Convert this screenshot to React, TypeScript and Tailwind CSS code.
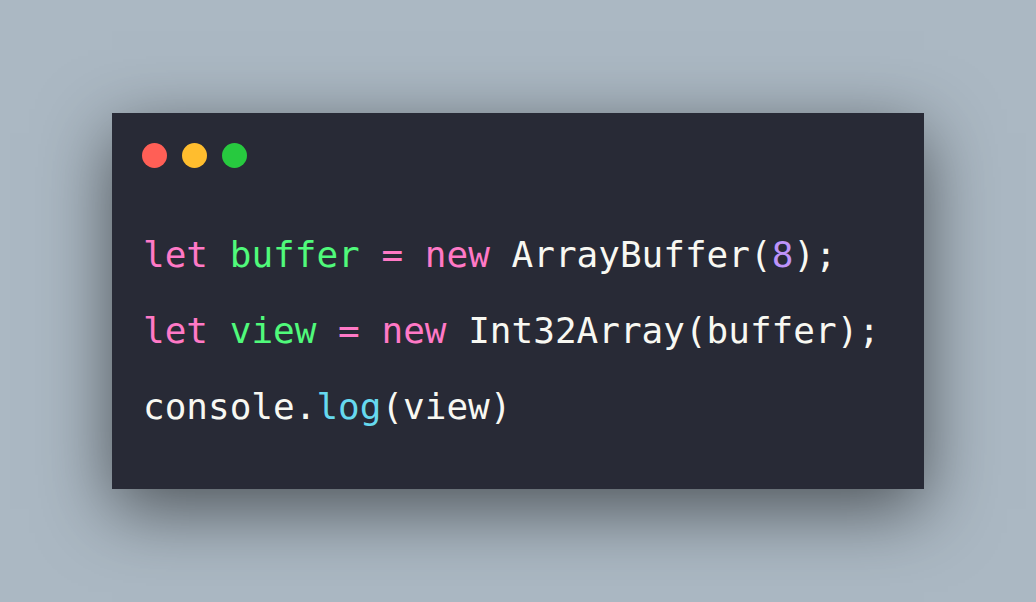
import React from "react";

const Dot = ({ color }: { color: string }) => (
  <div className={`w-[25px] h-[25px] rounded-full ${color}`} />
);

const App = () => {
  return (
    <div className="w-full h-[602px] bg-[#abb8c3] flex items-center justify-center">
      <div className="w-[812px] h-[376px] bg-[#282a36] shadow-[0_20px_68px_rgba(0,0,0,0.55)] pt-[30px] pl-[30px] font-['DejaVu_Sans_Mono',monospace]">
        <div className="flex items-center gap-[15px]">
          <Dot color="bg-[#ff5f56]" />
          <Dot color="bg-[#ffbd2e]" />
          <Dot color="bg-[#27c93f]" />
        </div>
        <div className="mt-[49px] pl-[1px] text-[36px] leading-[76px] text-[#f8f8f2] whitespace-pre">
          <div>
            <span className="text-[#ff79c6]">let</span>{" "}
            <span className="text-[#50fa7b]">buffer</span>{" "}
            <span className="text-[#ff79c6]">=</span>{" "}
            <span className="text-[#ff79c6]">new</span> ArrayBuffer(
            <span className="text-[#bd93f9]">8</span>);
          </div>
          <div>
            <span className="text-[#ff79c6]">let</span>{" "}
            <span className="text-[#50fa7b]">view</span>{" "}
            <span className="text-[#ff79c6]">=</span>{" "}
            <span className="text-[#ff79c6]">new</span> Int32Array(buffer);
          </div>
          <div>
            console.<span className="text-[#66d9ef]">log</span>(view)
          </div>
        </div>
      </div>
    </div>
  );
};

export default App;
